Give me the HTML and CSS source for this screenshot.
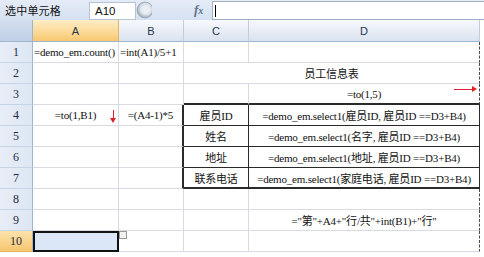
FILE: index.html
```html
<!DOCTYPE html>
<html lang="zh-CN">
<head>
    <meta charset="UTF-8">
    <title>选中单元格</title>
    <link rel="stylesheet" href="styles.css">
</head>
<body>
    <!-- Name box + formula bar -->
    <div class="toolbar">
        <span class="sel-label">选中单元格</span>
        <div class="namebox">A10</div>
        <svg class="name-btn" width="16" height="18" viewBox="0 0 16 18">
            <defs>
                <radialGradient id="knob" cx="0.55" cy="0.45" r="0.6">
                    <stop offset="0" stop-color="#ffffff"/>
                    <stop offset="0.6" stop-color="#d6dde6"/>
                    <stop offset="1" stop-color="#8c9aab"/>
                </radialGradient>
            </defs>
            <circle cx="9" cy="9" r="8" fill="url(#knob)" stroke="#9aa7b7" stroke-width="0.8"/>
            <circle cx="10" cy="9" r="4" fill="#e9eef4"/>
        </svg>
        <span class="fx">f<span class="fx-x">x</span></span>
        <div class="formula"><span class="caret"></span></div>
    </div>

    <!-- Sheet grid -->
    <div class="sheet">
        <div class="corner"></div>
        <div class="colhead active">A</div>
        <div class="colhead">B</div>
        <div class="colhead">C</div>
        <div class="colhead">D</div>
        <div class="colhead tail"></div>

        <div class="rowhead">1</div>
        <div class="cell left">=demo_em.count()</div>
        <div class="cell left">=int(A1)/5+1</div>
        <div class="cell"></div>
        <div class="cell d"></div>
        <div class="cell tail"></div>

        <div class="rowhead">2</div>
        <div class="cell"></div>
        <div class="cell"></div>
        <div class="cell d merged">员工信息表</div>
        <div class="cell tail"></div>

        <div class="rowhead">3</div>
        <div class="cell"></div>
        <div class="cell"></div>
        <div class="cell box-top"></div>
        <div class="cell d box-top">=to(1,5)<span class="arrow-right"></span></div>
        <div class="cell tail"></div>

        <div class="rowhead">4</div>
        <div class="cell">=to(1,B1)<span class="arrow-down"></span></div>
        <div class="cell box-left">=(A4-1)*5</div>
        <div class="cell bx">雇员ID</div>
        <div class="cell d bx">=demo_em.select1(雇员ID, 雇员ID ==D3+B4)</div>
        <div class="cell tail"></div>

        <div class="rowhead">5</div>
        <div class="cell"></div>
        <div class="cell box-left"></div>
        <div class="cell bx">姓名</div>
        <div class="cell d bx">=demo_em.select1(名字, 雇员ID ==D3+B4)</div>
        <div class="cell tail"></div>

        <div class="rowhead">6</div>
        <div class="cell"></div>
        <div class="cell box-left"></div>
        <div class="cell bx">地址</div>
        <div class="cell d bx">=demo_em.select1(地址, 雇员ID ==D3+B4)</div>
        <div class="cell tail"></div>

        <div class="rowhead">7</div>
        <div class="cell"></div>
        <div class="cell box-left"></div>
        <div class="cell bx bx-last">联系电话</div>
        <div class="cell d bx bx-last">=demo_em.select1(家庭电话, 雇员ID ==D3+B4)</div>
        <div class="cell tail"></div>

        <div class="rowhead">8</div>
        <div class="cell"></div>
        <div class="cell"></div>
        <div class="cell"></div>
        <div class="cell d"></div>
        <div class="cell tail"></div>

        <div class="rowhead">9</div>
        <div class="cell"></div>
        <div class="cell"></div>
        <div class="cell"></div>
        <div class="cell d">="第"+A4+"行/共"+int(B1)+"行"</div>
        <div class="cell tail"></div>

        <div class="rowhead active">10</div>
        <div class="cell selected"><span class="fill-handle"></span></div>
        <div class="cell"></div>
        <div class="cell"></div>
        <div class="cell d"></div>
        <div class="cell tail"></div>
    </div>
</body>
</html>
```

FILE: styles.css
```css
body {
    margin: 0;
    width: 484px;
    height: 257px;
    overflow: hidden;
    background: #ffffff;
    font-family: "Liberation Serif", "Noto Sans CJK SC", serif;
}

/* Top bar */
.toolbar {
    display: flex;
    align-items: center;
    height: 20px;
    background: linear-gradient(#e4ecf7, #d5e1f1);
}

.sel-label {
    font-family: "Noto Sans CJK SC", sans-serif;
    font-size: 11px;
    letter-spacing: 0.2px;
    color: #111111;
    margin-left: 5px;
    width: 84px;
    line-height: 20px;
}

.namebox {
    width: 40px;
    height: 16px;
    margin-top: 1px;
    padding-left: 5px;
    background: #ffffff;
    border: 1px solid #b7c3d3;
    font-family: "Liberation Sans", sans-serif;
    font-size: 11.5px;
    line-height: 16px;
    color: #111111;
}

.name-btn {
    width: 16px;
    height: 18px;
}

.fx {
    margin-left: 42px;
    width: 18px;
    font-family: "Liberation Serif", serif;
    font-style: italic;
    font-weight: bold;
    font-size: 13px;
    color: #5f7391;
}

.fx-x {
    font-size: 10px;
}

.formula {
    flex: 1;
    align-self: stretch;
    margin-top: 1px;
    background: #ffffff;
    border-top: 1px solid #a9b1bb;
    border-left: 1px solid #a9b1bb;
    border-bottom: 1px solid #9aabc2;
    display: flex;
    align-items: center;
}

.caret {
    display: block;
    margin-left: 2px;
    width: 1px;
    height: 12px;
    background: #000000;
}

/* Grid */
.sheet {
    display: grid;
    grid-template-columns: 33px 86px 65px 65px 231px 4px;
    grid-template-rows: 22px repeat(10, 21px);
}

.sheet > div {
    box-sizing: border-box;
}

.corner {
    background: linear-gradient(#d3deee, #bfcfe6);
    border-right: 1px solid #9eb6ce;
    border-bottom: 1px solid #9eb6ce;
}

.colhead {
    background: linear-gradient(#f6f8fc 0%, #e9eef6 50%, #d9e2ef 100%);
    border-right: 1px solid #c0cddf;
    border-bottom: 1px solid #9eb6ce;
    font-family: "Liberation Sans", sans-serif;
    font-size: 11px;
    color: #27364f;
    display: flex;
    align-items: center;
    justify-content: center;
}

.colhead.active {
    background: linear-gradient(#fdedc8 0%, #fbdc9c 50%, #f7c86f 100%);
    border-right-color: #e2b565;
}

.colhead.tail {
    background: #ffffff;
    border-right: none;
    border-bottom: none;
}

.rowhead {
    background: linear-gradient(90deg, #e8eef8, #dde6f3);
    border-right: 1px solid #9eb6ce;
    border-bottom: 1px solid #c7d4e6;
    font-size: 12px;
    color: #1f2d45;
    display: flex;
    align-items: center;
    justify-content: center;
}

.rowhead.active {
    background: linear-gradient(#fde3ad, #f6c670);
    border-bottom-color: #e2b565;
}

.cell {
    position: relative;
    border-right: 1px solid #d7dbe1;
    border-bottom: 1px solid #d7dbe1;
    font-size: 11px;
    letter-spacing: -0.2px;
    color: #111111;
    white-space: nowrap;
    display: flex;
    align-items: center;
    justify-content: center;
}

.cell.left {
    justify-content: flex-start;
    padding-left: 1px;
}

.cell.d {
    border-right: 1px dashed #4a4a4a;
}

.cell.merged {
    grid-column: span 2;
}

.cell.tail {
    border: none;
}

/* Bordered block C4:D7 */
.cell.box-top {
    border-bottom: 2px solid #2a2a2a;
}

.cell.box-left {
    border-right: 2px solid #2a2a2a;
}

.cell.bx {
    border-bottom: 1px solid #2a2a2a;
    border-right: 1px solid #2a2a2a;
}

.cell.bx-last {
    border-bottom: 2px solid #2a2a2a;
}

/* Selected cell */
.cell.selected {
    background: #dbe7f7;
    border: 2px solid #111111;
}

.fill-handle {
    position: absolute;
    top: -2px;
    right: -10px;
    width: 6px;
    height: 6px;
    background: #f2f2f2;
    border: 1px solid #9a9a9a;
}

/* Red expansion arrows */
.arrow-down {
    position: absolute;
    left: 80px;
    top: 5px;
    width: 1px;
    height: 11px;
    background: #e0202a;
}

.arrow-down::after {
    content: "";
    position: absolute;
    left: -3px;
    bottom: -2px;
    border-left: 3.5px solid transparent;
    border-right: 3.5px solid transparent;
    border-top: 5px solid #e0202a;
}

.arrow-right {
    position: absolute;
    right: 5px;
    top: 5px;
    width: 20px;
    height: 1px;
    background: #e0202a;
}

.arrow-right::after {
    content: "";
    position: absolute;
    right: -3px;
    top: -3px;
    border-top: 3.5px solid transparent;
    border-bottom: 3.5px solid transparent;
    border-left: 5px solid #e0202a;
}
```
